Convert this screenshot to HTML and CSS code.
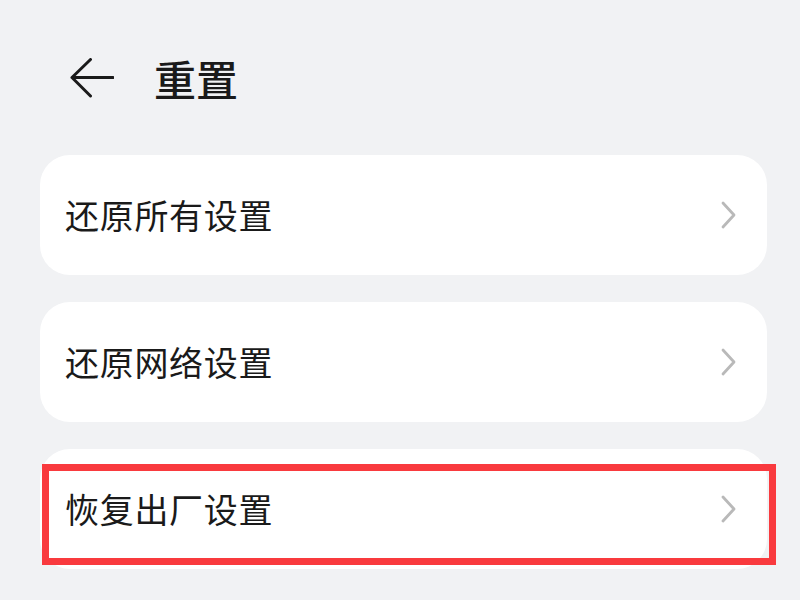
FILE: index.html
```html
<!DOCTYPE html>
<html lang="zh-CN">
<head>
<meta charset="utf-8">
<title>重置</title>
<link rel="stylesheet" href="styles.css">
</head>
<body>
<div class="page">
  <header class="header">
    <svg class="back" width="44" height="40" viewBox="0 0 44 40" aria-hidden="true">
      <path d="M43 19.5H2M20.5 1.5L2 19.5L20.5 38" fill="none" stroke="#1a1a1a" stroke-width="3" stroke-linecap="round" stroke-linejoin="round"/>
    </svg>
    <h1 class="title">重置</h1>
  </header>
  <div class="list">
    <div class="card">
      <span class="label">还原所有设置</span>
      <svg class="chev" width="15" height="28" viewBox="0 0 15 28" aria-hidden="true"><path d="M2 2L13 14L2 26" fill="none" stroke="#b9b9b9" stroke-width="2.8" stroke-linecap="round" stroke-linejoin="round"/></svg>
    </div>
    <div class="card">
      <span class="label">还原网络设置</span>
      <svg class="chev" width="15" height="28" viewBox="0 0 15 28" aria-hidden="true"><path d="M2 2L13 14L2 26" fill="none" stroke="#b9b9b9" stroke-width="2.8" stroke-linecap="round" stroke-linejoin="round"/></svg>
    </div>
    <div class="card card-marked">
      <span class="label">恢复出厂设置</span>
      <svg class="chev" width="15" height="28" viewBox="0 0 15 28" aria-hidden="true"><path d="M2 2L13 14L2 26" fill="none" stroke="#b9b9b9" stroke-width="2.8" stroke-linecap="round" stroke-linejoin="round"/></svg>
      <div class="highlight"></div>
    </div>
  </div>
</div>
</body>
</html>
```
FILE: styles.css
```css
html, body {
  margin: 0;
  padding: 0;
}
body {
  background: #f1f2f4;
  font-family: "Noto Sans CJK SC", "Noto Sans", sans-serif;
  color: #1a1a1a;
}
.page {
  width: 800px;
  height: 600px;
  overflow: hidden;
}
.header {
  height: 155px;
  display: flex;
  align-items: center;
  padding-left: 70px;
  gap: 40px;
  box-sizing: border-box;
}
.back {
  display: block;
  flex: none;
}
.title {
  margin: 0;
  font-size: 42px;
  font-weight: 500;
  line-height: 1;
  color: #1a1a1a;
}
.list {
  display: flex;
  flex-direction: column;
  gap: 27px;
  padding-left: 40px;
}
.card {
  width: 727px;
  height: 120px;
  background: #ffffff;
  border-radius: 30px;
  display: flex;
  align-items: center;
  justify-content: space-between;
  padding: 0 31px 0 25px;
  box-sizing: border-box;
}
.label {
  font-size: 34px;
  line-height: 1;
  letter-spacing: 0.7px;
  color: #1a1a1a;
}
.chev {
  display: block;
  flex: none;
}
.card-marked {
  position: relative;
}
.highlight {
  position: absolute;
  left: 2px;
  top: 15px;
  width: 734px;
  height: 101px;
  border: 7px solid #f93a3e;
  box-sizing: border-box;
}
```
